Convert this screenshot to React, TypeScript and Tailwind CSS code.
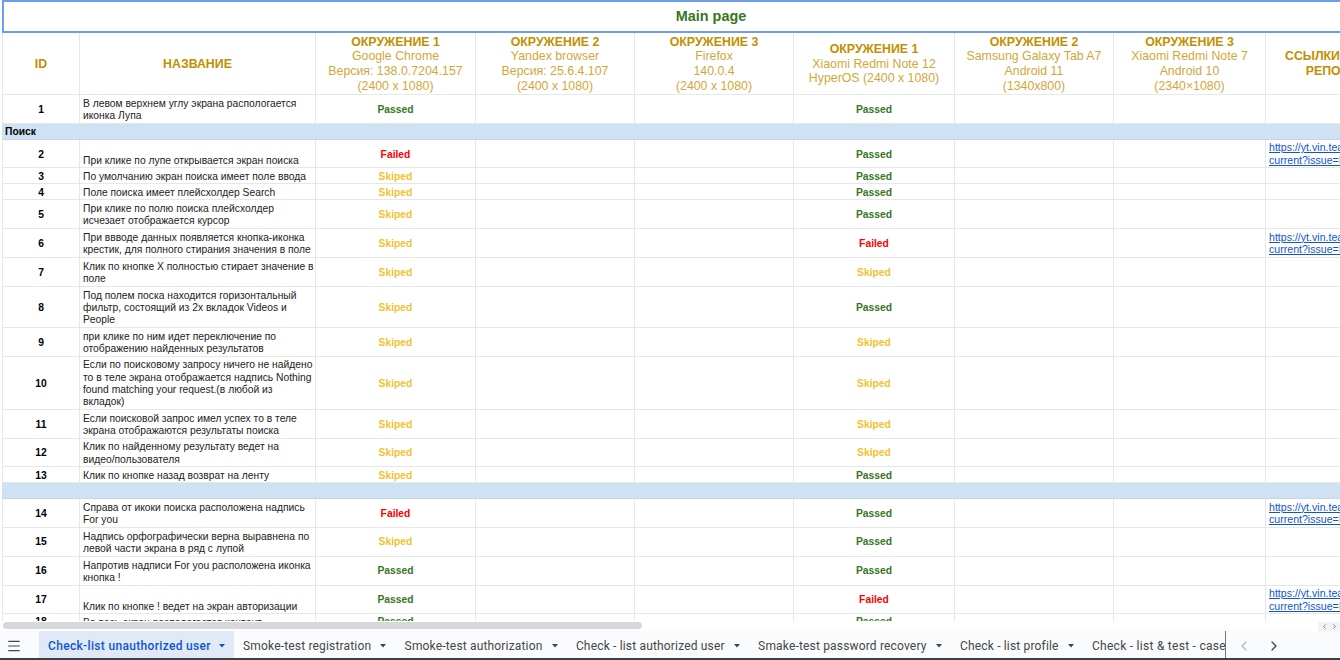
import { ChevronLeft, ChevronRight, Menu } from "lucide-react";

type Status = "Passed" | "Failed" | "Skiped" | "";

interface Row {
  id: string;
  name: string;
  height: string;
  alignEnd?: boolean;
  web?: Status;
  mobile?: Status;
  link?: boolean;
  // top padding of the id and status cells, default pt-[2px]
  pad?: string;
}

const GRID = "grid grid-cols-[78px_236px_160px_159px_159px_161px_159px_152px_142px]";

const rows1: Row[] = [
  { id: "2", name: "При клике по лупе открывается экран поиска", height: "h-[28px]", alignEnd: true, web: "Failed", mobile: "Passed", link: true, pad: "pt-[3px]" },
  { id: "3", name: "По умолчанию экран поиска имеет поле ввода", height: "h-[16px]", web: "Skiped", mobile: "Passed", pad: "pt-[3px]" },
  { id: "4", name: "Поле поиска имеет плейсхолдер Search", height: "h-[16px]", web: "Skiped", mobile: "Passed", pad: "pt-[3px]" },
  { id: "5", name: "При клике по полю поиска плейсхолдер исчезает отображается курсор", height: "h-[29px]", web: "Skiped", mobile: "Passed" },
  { id: "6", name: "При ввводе данных появляется кнопка-иконка крестик, для полного стирания значения в поле", height: "h-[29px]", web: "Skiped", mobile: "Failed", link: true },
  { id: "7", name: "Клик по кнопке Х полностью стирает значение в поле", height: "h-[29px]", web: "Skiped", mobile: "Skiped" },
  { id: "8", name: "Под полем поска находится горизонтальный фильтр, состоящий из 2х вкладок Videos и People", height: "h-[41px]", web: "Skiped", mobile: "Passed" },
  { id: "9", name: "при клике по ним идет переключение по отображению найденных результатов", height: "h-[29px]", web: "Skiped", mobile: "Skiped" },
  { id: "10", name: "Если по поисковому запросу ничего не найдено то в теле экрана отображается надпись Nothing found matching your request.(в любой из вкладок)", height: "h-[53px]", web: "Skiped", mobile: "Skiped" },
  { id: "11", name: "Если поисковой запрос имел успех то в теле экрана отображаются результаты поиска", height: "h-[29px]", web: "Skiped", mobile: "Skiped" },
  { id: "12", name: "Клик по найденному результату ведет на видео/\u2060пользователя", height: "h-[28px]", web: "Skiped", mobile: "Skiped" },
  { id: "13", name: "Клик по кнопке назад возврат на ленту", height: "h-[16px]", web: "Skiped", mobile: "Passed", pad: "pt-[3px]" },
];

const rows2: Row[] = [
  { id: "14", name: "Справа от икоки поиска расположена надпись For you", height: "h-[29px]", web: "Failed", mobile: "Passed", link: true },
  { id: "15", name: "Надпись орфографически верна выравнена по левой части экрана в ряд с лупой", height: "h-[29px]", web: "Skiped", mobile: "Passed", pad: "pt-px" },
  { id: "16", name: "Напротив надписи For you расположена иконка кнопка !", height: "h-[29px]", web: "Passed", mobile: "Passed", pad: "pt-px" },
  { id: "17", name: "Клик по кнопке ! ведет на экран авторизации", height: "h-[28px]", alignEnd: true, web: "Passed", mobile: "Failed", link: true },
  { id: "18", name: "Во весь экран распологается контент", height: "h-[16px]", web: "Passed", mobile: "Passed" },
];

const headers = [
  ["ОКРУЖЕНИЕ 1", "Google Chrome", "Версия: 138.0.7204.157", "(2400 x 1080)"],
  ["ОКРУЖЕНИЕ 2", "Yandex browser", "Версия: 25.6.4.107", "(2400 x 1080)"],
  ["ОКРУЖЕНИЕ 3", "Firefox", "140.0.4", "(2400 x 1080)"],
  ["ОКРУЖЕНИЕ 1", "Xiaomi Redmi Note 12", "HyperOS (2400 x 1080)"],
  ["ОКРУЖЕНИЕ 2", "Samsung Galaxy Tab A7", "Android 11", "(1340x800)"],
  ["ОКРУЖЕНИЕ 3", "Xiaomi Redmi Note 7", "Android 10", "(2340×1080)"],
];

const tabs = [
  "Smoke-test registration",
  "Smoke-test authorization",
  "Check - list authorized user",
  "Smake-test password recovery",
  "Check - list profile",
];

const statusColor: Record<string, string> = {
  Passed: "text-[#38761d]",
  Failed: "text-[#ff0000]",
  Skiped: "text-[#f1c232]",
};

function StatusCell({ value, pad }: { value?: Status; pad: string }) {
  return (
    <div className={`flex items-center justify-center border-r border-[#e6e7e7] ${pad} font-bold ${value ? statusColor[value] : ""}`}>
      {value}
    </div>
  );
}

function Blank() {
  return <div className="border-r border-[#e6e7e7]" />;
}

function TableRow({ row }: { row: Row }) {
  const pad = row.pad ?? "pt-[2px]";
  const namePad = row.height === "h-[16px]" ? "pt-[3px]" : "pt-[2px]";
  return (
    <div className={`${GRID} ${row.height} overflow-hidden border-b border-[#e6e7e7]`}>
      <div className={`flex items-center justify-center border-r border-l border-[#e6e7e7] ${pad} font-bold text-black`}>{row.id}</div>
      <div className={`flex overflow-hidden border-r border-[#e6e7e7] pl-[3px] ${row.alignEnd ? "items-end" : `items-center ${namePad}`}`}>
        <span>{row.name}</span>
      </div>
      <StatusCell value={row.web} pad={pad} />
      <Blank />
      <Blank />
      <StatusCell value={row.mobile} pad={pad} />
      <Blank />
      <Blank />
      <div className="flex items-center overflow-hidden pl-[3px] text-[10.6px] whitespace-nowrap text-[#1155cc] underline">
        {row.link && (
          <span>
            https://yt.vin.team/agiles
            <br />
            current?issue=INF-1042
          </span>
        )}
      </div>
    </div>
  );
}

function SectionRow({ title }: { title?: string }) {
  return (
    <div className="flex h-[16px] items-center border-b border-[#c4d6e8] bg-[#cfe2f3] pt-[2px] pl-[3px] font-bold text-black">
      {title}
    </div>
  );
}

function Caret({ color }: { color: string }) {
  return (
    <svg width="6" height="4" viewBox="0 0 6 4" className={color}>
      <path d="M0 0h6L3 3.6z" fill="currentColor" />
    </svg>
  );
}

export default function App() {
  return (
    <div className="flex h-[660px] w-[1340px] flex-col overflow-hidden bg-white font-['Liberation_Sans',Arial,sans-serif] text-[10.3px] leading-[12.3px] text-[#222222]">
      <div className="min-h-0 flex-1 overflow-hidden pl-[2px]">
        <div className="flex h-[33px] w-[1400px] items-center justify-center border-2 border-[#6d9eeb] pl-[18px] text-[14.4px] font-bold text-[#38761d]">
          Main page
        </div>
        <div className={`${GRID} h-[62px] border-b border-[#e6e7e7] text-[12.35px] leading-[14.7px] text-[#d1a73a]`}>
          <div className="flex items-center justify-center border-r border-l border-[#e6e7e7] pt-[2px] font-bold text-[#bf9000]">ID</div>
          <div className="flex items-center justify-center border-r border-[#e6e7e7] pt-[2px] font-bold text-[#bf9000]">НАЗВАНИЕ</div>
          {headers.map((lines, i) => (
            <div key={i} className="flex flex-col items-center justify-center border-r border-[#e6e7e7] pt-px text-center whitespace-nowrap">
              {lines.map((line, j) => (
                <span key={j} className={j === 0 ? "font-bold text-[#bf9000]" : ""}>{line}</span>
              ))}
            </div>
          ))}
          <div className="flex flex-col items-center justify-center font-bold whitespace-nowrap text-[#bf9000]">
            <span>ССЫЛКИ НА БАГ</span>
            <span>РЕПОРТЫ</span>
          </div>
        </div>
        <TableRow row={{ id: "1", name: "В левом верхнем углу экрана распологается иконка Лупа", height: "h-[29px]", web: "Passed", mobile: "Passed" }} />
        <SectionRow title="Поиск" />
        {rows1.map((row) => (
          <TableRow key={row.id} row={row} />
        ))}
        <SectionRow />
        {rows2.map((row) => (
          <TableRow key={row.id} row={row} />
        ))}
      </div>

      {/* horizontal scrollbar */}
      <div className="flex h-[10px] shrink-0 items-end justify-between bg-white pl-[3px]">
        <div className="mb-[2px] h-[7px] w-[639px] rounded-full bg-[#d6d8dc]" />
        <div className="flex h-[9px] w-[22px] items-center justify-center gap-[3px] bg-[#f1f3f4] text-[#70757a]">
          <ChevronLeft size={7} strokeWidth={3} />
          <ChevronRight size={7} strokeWidth={3} />
        </div>
      </div>

      {/* sheet tabs */}
      <div className="flex h-[29px] shrink-0 border-b-2 border-b-[#3c4043] bg-[#f9fbfd] font-['Roboto',sans-serif] text-[12px] tracking-[0.17px] whitespace-nowrap text-[#444746]">
        <div className="flex w-[39px] items-center pt-[2px] pl-[6px]">
          <Menu size={16} strokeWidth={1.75} />
        </div>
        <div className="flex w-[195px] items-center gap-[8px] bg-[#e1e9f7] pt-[3px] pl-[9px] font-medium tracking-[0.33px] text-[#0b57d0]">
          <span>Check-list unauthorized user</span>
          <Caret color="text-[#0b57d0]" />
        </div>
        <div className="flex w-[991px] overflow-hidden">
          {tabs.map((tab) => (
            <div key={tab} className="flex shrink-0 items-center gap-[9px] pt-[3px] pr-[9.4px] pl-[9px]">
              <span>{tab}</span>
              <Caret color="text-[#444746]" />
            </div>
          ))}
          <div className="flex shrink-0 items-center pt-[3px] pl-[9px] tracking-[0.27px]">Check - list &amp; test - case</div>
        </div>
        <div className="h-full w-px bg-[#747775]" />
        <div className="flex flex-1 items-center gap-[14px] pt-[2px] pl-[10px]">
          <ChevronLeft size={16} className="text-[#b4b6b8]" />
          <ChevronRight size={16} className="text-[#444746]" />
        </div>
      </div>
    </div>
  );
}
